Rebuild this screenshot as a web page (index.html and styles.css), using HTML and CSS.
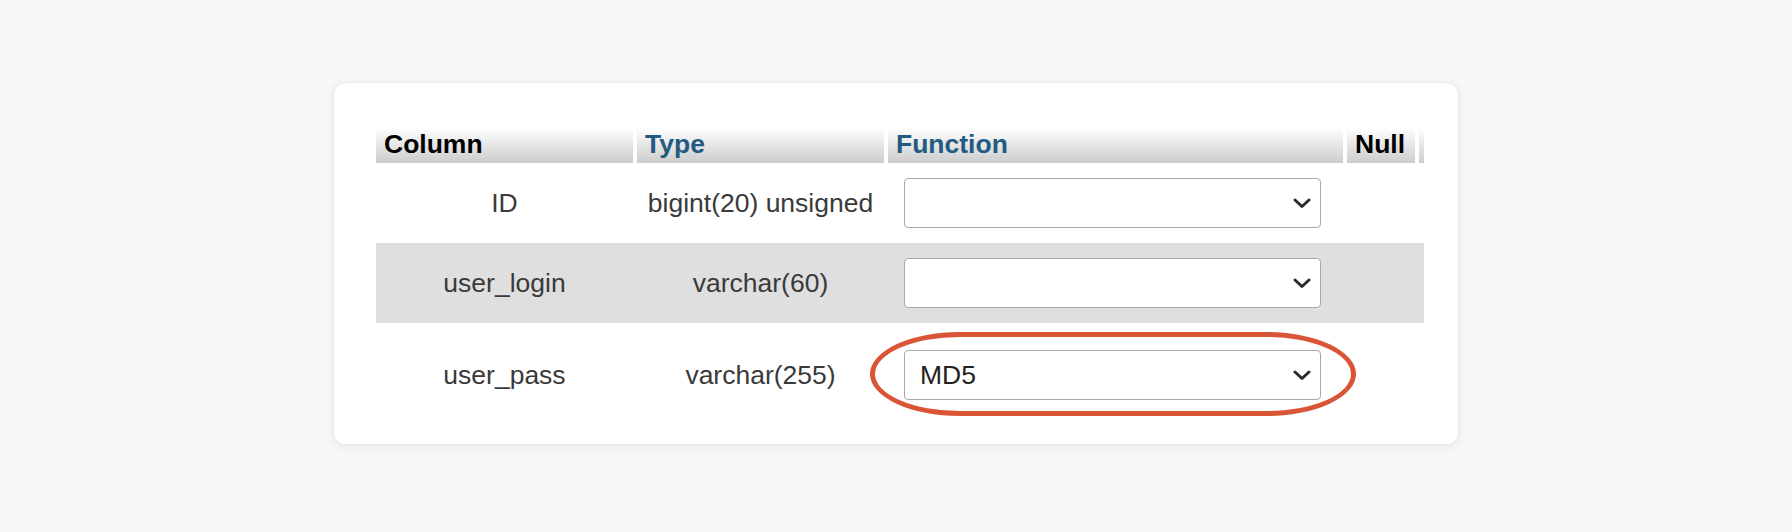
FILE: index.html
```html
<!DOCTYPE html>
<html lang="en">
<head>
<meta charset="utf-8">
<title>Insert row</title>
<link rel="stylesheet" href="styles.css">
</head>
<body>
<div class="card">
  <div class="grid">
    <div class="row head">
      <div class="th">Column</div>
      <div class="th link">Type</div>
      <div class="th link">Function</div>
      <div class="th">Null</div>
      <div class="th stub"></div>
    </div>
    <div class="row">
      <div class="td">ID</div>
      <div class="td">bigint(20) unsigned</div>
      <div class="td fn">
        <div class="select"><span class="value"></span><svg class="chev" viewBox="0 0 18 11" width="18" height="11"><polyline points="2,2 9,8.5 16,2" fill="none" stroke="#2b2b2b" stroke-width="3" stroke-linecap="round" stroke-linejoin="round"/></svg></div>
      </div>
      <div class="td"></div>
      <div class="td"></div>
    </div>
    <div class="row even">
      <div class="td">user_login</div>
      <div class="td">varchar(60)</div>
      <div class="td fn">
        <div class="select"><span class="value"></span><svg class="chev" viewBox="0 0 18 11" width="18" height="11"><polyline points="2,2 9,8.5 16,2" fill="none" stroke="#2b2b2b" stroke-width="3" stroke-linecap="round" stroke-linejoin="round"/></svg></div>
      </div>
      <div class="td"></div>
      <div class="td"></div>
    </div>
    <div class="row last">
      <div class="td">user_pass</div>
      <div class="td">varchar(255)</div>
      <div class="td fn">
        <div class="select marked"><span class="value">MD5</span><svg class="chev" viewBox="0 0 18 11" width="18" height="11"><polyline points="2,2 9,8.5 16,2" fill="none" stroke="#2b2b2b" stroke-width="3" stroke-linecap="round" stroke-linejoin="round"/></svg><span class="ring"></span></div>
      </div>
      <div class="td"></div>
      <div class="td"></div>
    </div>
  </div>
</div>
</body>
</html>
```

FILE: styles.css
```css
html, body {
  margin: 0;
  padding: 0;
}
body {
  background: #f7f7f7;
  height: 532px;
  box-sizing: border-box;
  padding-top: 82px;
  display: flex;
  justify-content: center;
  align-items: flex-start;
  font-family: "Liberation Sans", Arial, Helvetica, sans-serif;
  font-size: 26.5px;
  color: #3a3a3a;
}
.card {
  width: 1126px;
  height: 363px;
  box-sizing: border-box;
  background: #fff;
  border: 1px solid #e8e8e8;
  border-radius: 12px;
  box-shadow: 0 2px 10px rgba(0, 0, 0, 0.06);
  padding: 45px 0 0 42px;
}
.grid {
  width: 1048px;
  display: flex;
  flex-direction: column;
}
.row {
  display: grid;
  grid-template-columns: 261px 251px 459px 72px 5px;
  height: 80px;
  align-items: center;
}
.row.head {
  height: 35px;
  align-items: stretch;
}
.row.even {
  background: #dfdfdf;
}
.row.last {
  height: 104px;
}
.th {
  margin-right: 4px;
  background: linear-gradient(#ffffff, #cccccc);
  font-weight: bold;
  color: #000;
  padding-left: 8px;
  line-height: 33px;
  white-space: nowrap;
  overflow: hidden;
}
.th.link {
  color: #235a81;
}
.th.stub {
  margin-right: 0;
  padding-left: 0;
}
.td {
  padding-right: 4px;
  text-align: center;
  white-space: nowrap;
}
.td.fn {
  text-align: left;
  padding-left: 16px;
  padding-right: 0;
}
.select {
  position: relative;
  width: 417px;
  height: 50px;
  box-sizing: border-box;
  background: #fff;
  border: 1px solid #a8a8a8;
  border-radius: 4px;
  display: flex;
  align-items: center;
  justify-content: space-between;
  padding: 0 9px 0 15px;
  color: #222;
}
.chev {
  display: block;
}
.ring {
  position: absolute;
  left: -35px;
  top: -19px;
  width: 486px;
  height: 84px;
  box-sizing: border-box;
  border: 5px solid #da5436;
  border-radius: 90px / 42px;
  pointer-events: none;
}
```
